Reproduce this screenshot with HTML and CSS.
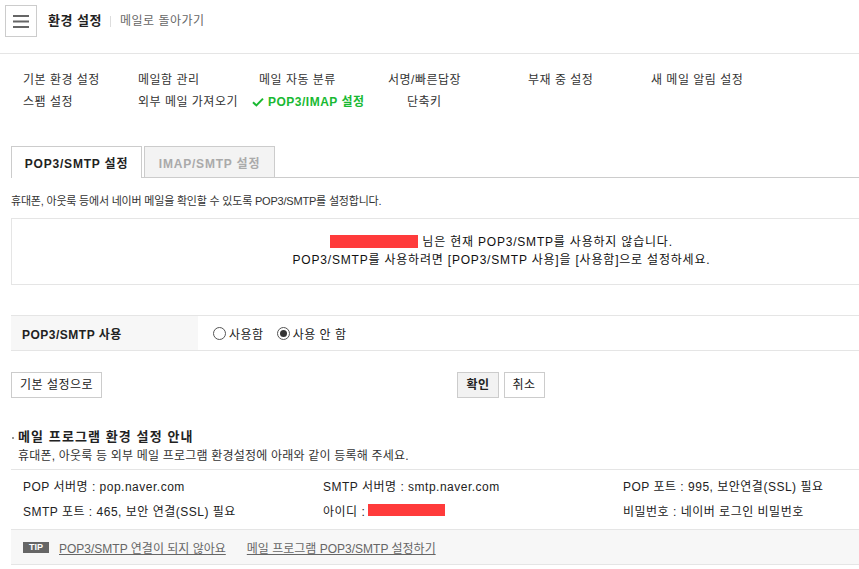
FILE: index.html
```html
<!DOCTYPE html>
<html lang="ko">
<head>
<meta charset="utf-8">
<title>환경 설정</title>
<link rel="stylesheet" href="styles.css">
</head>
<body>
<header class="topbar">
  <button class="menu-btn" aria-label="메뉴">
    <svg width="16" height="13" viewBox="0 0 16 13"><rect x="0" y="0" width="16" height="2" fill="#666"/><rect x="0" y="5.5" width="16" height="2" fill="#666"/><rect x="0" y="11" width="16" height="2" fill="#666"/></svg>
  </button>
  <h1 class="title">환경 설정</h1>
  <span class="sep"></span>
  <a class="back" href="#">메일로 돌아가기</a>
</header>

<nav class="settings-nav">
  <a href="#" class="nav-item">기본 환경 설정</a>
  <a href="#" class="nav-item">메일함 관리</a>
  <a href="#" class="nav-item">메일 자동 분류</a>
  <a href="#" class="nav-item">서명/빠른답장</a>
  <a href="#" class="nav-item">부재 중 설정</a>
  <a href="#" class="nav-item">새 메일 알림 설정</a>
  <a href="#" class="nav-item">스팸 설정</a>
  <a href="#" class="nav-item">외부 메일 가져오기</a>
  <a href="#" class="nav-item active"><svg class="check" width="12" height="10" viewBox="0 0 12 10"><path d="M1 5.2 L4.4 8.4 L11 1.6" fill="none" stroke="#19b932" stroke-width="2"/></svg>POP3/IMAP 설정</a>
  <a href="#" class="nav-item shortcut">단축키</a>
</nav>

<main class="content">
  <div class="tabs">
    <a href="#" class="tab active">POP3/SMTP 설정</a>
    <a href="#" class="tab">IMAP/SMTP 설정</a>
  </div>
  <p class="desc">휴대폰, 아웃룩 등에서 네이버 메일을 확인할 수 있도록 POP3/SMTP를 설정합니다.</p>

  <div class="notice">
    <p><span class="redact redact-name"></span> 님은 현재 POP3/SMTP를 사용하지 않습니다.</p>
    <p>POP3/SMTP를 사용하려면 [POP3/SMTP 사용]을 [사용함]으로 설정하세요.</p>
  </div>

  <div class="setting-row">
    <div class="setting-label">POP3/SMTP 사용</div>
    <div class="setting-value">
      <label class="radio"><input type="radio" name="pop"><span>사용함</span></label>
      <label class="radio"><input type="radio" name="pop" checked><span>사용 안 함</span></label>
    </div>
  </div>

  <div class="btn-row">
    <div class="btn-left"><button class="btn">기본 설정으로</button></div>
    <div class="btn-center">
      <button class="btn primary">확인</button>
      <button class="btn">취소</button>
    </div>
    <div></div>
  </div>

  <section class="guide">
    <h2 class="guide-title">메일 프로그램 환경 설정 안내</h2>
    <p class="guide-sub">휴대폰, 아웃룩 등 외부 메일 프로그램 환경설정에 아래와 같이 등록해 주세요.</p>
    <div class="guide-box">
      <div class="guide-grid">
        <span>POP 서버명 : pop.naver.com</span>
        <span>SMTP 서버명 : smtp.naver.com</span>
        <span>POP 포트 : 995, 보안연결(SSL) 필요</span>
        <span>SMTP 포트 : 465, 보안 연결(SSL) 필요</span>
        <span class="id-cell">아이디 : <span class="redact redact-id"></span></span>
        <span>비밀번호 : 네이버 로그인 비밀번호</span>
      </div>
      <div class="tip">
        <span class="tip-badge">TIP</span>
        <a href="#">POP3/SMTP 연결이 되지 않아요</a>
        <a href="#">메일 프로그램 POP3/SMTP 설정하기</a>
      </div>
    </div>
  </section>
</main>
</body>
</html>
```

FILE: styles.css
```css
html, body {
  margin: 0;
  padding: 0;
  overflow: hidden;
}
body {
  font-family: "Liberation Sans", "Noto Sans CJK KR", sans-serif;
  font-size: 12px;
  letter-spacing: 0.5px;
  color: #222;
  background: #fff;
}
a { color: inherit; text-decoration: none; }
p, h1, h2 { margin: 0; }

/* header */
.topbar {
  box-sizing: border-box;
  height: 54px;
  padding: 5px 0 0 5px;
  border-bottom: 1px solid #e5e5e5;
  display: flex;
  align-items: flex-start;
}
.menu-btn {
  box-sizing: border-box;
  width: 32px;
  height: 32px;
  border: 1px solid #ccc;
  background: #fff;
  padding: 0;
  display: flex;
  align-items: center;
  justify-content: center;
}
.title {
  font-size: 13px;
  font-weight: bold;
  line-height: 32px;
  margin-left: 11px;
  color: #222;
}
.sep {
  width: 1px;
  height: 11px;
  background: #ddd;
  margin: 11px 9px 0 8px;
}
.back {
  line-height: 32px;
  color: #666;
  font-size: 12px;
}

/* nav */
.settings-nav {
  display: grid;
  grid-template-columns: 115px 121px 129px 140px 123px auto;
  grid-auto-rows: 22px;
  padding: 15px 0 0 23px;
  width: 836px;
}
.nav-item {
  line-height: 22px;
  color: #333;
  white-space: nowrap;
  display: flex;
  align-items: center;
}
.nav-item.active {
  color: #19b932;
  font-weight: bold;
  margin-left: -7px;
}
.check { margin-right: 4px; }
.nav-item.shortcut { margin-left: 19px; }

/* content */
.content {
  width: 980px;
  padding-left: 11px;
  margin-top: 33px;
}
.tabs {
  display: flex;
  gap: 2px;
  height: 31px;
  border-bottom: 1px solid #ccc;
}
.tab {
  box-sizing: border-box;
  width: 131px;
  height: 31px;
  border: 1px solid #ccc;
  border-bottom: none;
  background: #f3f3f3;
  color: #aaa;
  font-weight: bold;
  font-size: 12px;
  letter-spacing: 0.8px;
  display: flex;
  align-items: center;
  justify-content: center;
}
.tab.active {
  height: 32px;
  background: #fff;
  color: #222;
  position: relative;
  z-index: 1;
}
.desc {
  font-size: 11px;
  letter-spacing: -0.2px;
  line-height: 16px;
  margin-top: 15px;
  color: #333;
}
.notice {
  margin-top: 9px;
  border: 1px solid #e5e5e5;
  border-right: none;
  padding: 14px 0 15px;
  text-align: center;
  line-height: 18px;
  letter-spacing: 0.8px;
  color: #111;
}
.redact {
  display: inline-block;
  background: #ff3b3b;
  vertical-align: middle;
}
.redact-name { width: 88px; height: 13px; margin-top: -3px; }
.redact-id { width: 77px; height: 12px; margin-top: -2px; }

.setting-row {
  margin-top: 30px;
  display: flex;
  height: 34px;
  border-top: 1px solid #e5e5e5;
  border-bottom: 1px solid #e5e5e5;
}
.setting-label {
  box-sizing: border-box;
  width: 187px;
  background: #f7f7f7;
  padding-left: 11px;
  font-weight: bold;
  display: flex;
  align-items: center;
}
.setting-value {
  display: flex;
  align-items: center;
  padding-left: 15px;
  gap: 13px;
}
.radio {
  display: flex;
  align-items: center;
  gap: 3px;
  color: #222;
}
.radio input {
  appearance: none;
  -webkit-appearance: none;
  box-sizing: border-box;
  width: 13px;
  height: 13px;
  margin: 0;
  border: 1px solid #555;
  border-radius: 50%;
  background: #fff;
  display: grid;
  place-items: center;
}
.radio input:checked::after {
  content: "";
  width: 7px;
  height: 7px;
  border-radius: 50%;
  background: #333;
}

.btn-row {
  margin-top: 21px;
  display: grid;
  grid-template-columns: 1fr auto 1fr;
  align-items: center;
}
.btn-center { display: flex; gap: 5px; }
.btn {
  box-sizing: border-box;
  height: 26px;
  padding: 0 8px;
  border: 1px solid #ccc;
  background: #fff;
  font-family: inherit;
  font-size: 12px;
  letter-spacing: 0.5px;
  color: #222;
  line-height: 24px;
}
.btn.primary {
  background: #f2f2f2;
  font-weight: bold;
}

.guide { margin-top: 30px; }
.guide-title {
  font-size: 13px;
  font-weight: bold;
  letter-spacing: 1.1px;
  line-height: 18px;
  padding-left: 7px;
  position: relative;
  color: #222;
}
.guide-title::before {
  content: "";
  position: absolute;
  left: 1px;
  top: 9px;
  width: 2px;
  height: 2px;
  background: #999;
}
.guide-sub {
  margin-top: 1px;
  line-height: 18px;
  padding-left: 7px;
  letter-spacing: 0.2px;
  color: #333;
}
.guide-box {
  margin-top: 4px;
  border-top: 1px solid #e5e5e5;
}
.guide-grid {
  display: grid;
  grid-template-columns: 300px 300px 300px;
  grid-auto-rows: 25px;
  padding: 3px 0 6px 12px;
  align-items: center;
  color: #222;
}
.id-cell { display: flex; align-items: center; gap: 3px; }
.tip {
  height: 34px;
  background: #f7f7f7;
  border-top: 1px solid #e5e5e5;
  border-bottom: 1px solid #e5e5e5;
  display: flex;
  align-items: center;
  padding-left: 12px;
  gap: 10px;
}
.tip-badge {
  width: 26px;
  height: 11px;
  background: #666;
  color: #fff;
  font-size: 9px;
  font-weight: bold;
  letter-spacing: 0;
  line-height: 11px;
  text-align: center;
}
.tip a {
  color: #666;
  text-decoration: underline;
  letter-spacing: 0;
  margin-right: 11px;
}
```
